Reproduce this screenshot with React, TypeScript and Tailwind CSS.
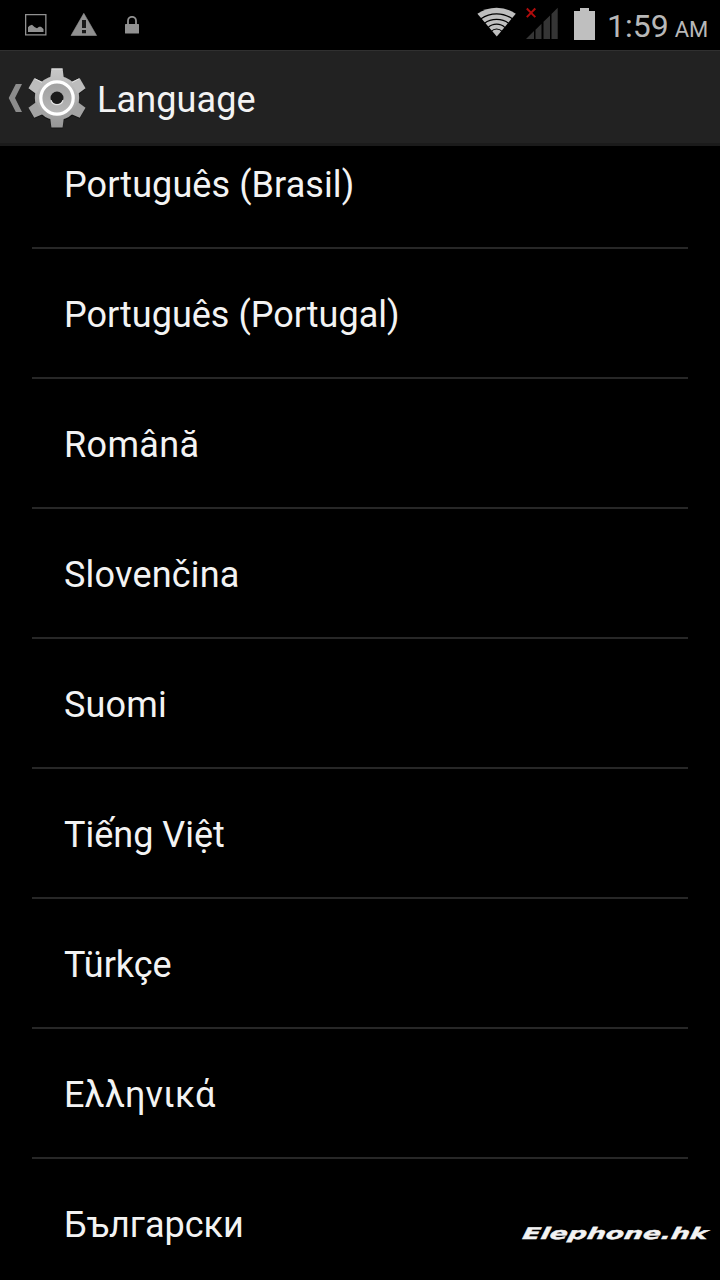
const languages: { name: string; tracking: string }[] = [
  { name: 'Português (Brasil)', tracking: 'tracking-[0.08px]' },
  { name: 'Português (Portugal)', tracking: 'tracking-normal' },
  { name: 'Română', tracking: 'tracking-[0.35px]' },
  { name: 'Slovenčina', tracking: 'tracking-[0.2px]' },
  { name: 'Suomi', tracking: 'tracking-[0.2px]' },
  { name: 'Tiếng Việt', tracking: 'tracking-normal' },
  { name: 'Türkçe', tracking: 'tracking-normal' },
  { name: 'Ελληνικά', tracking: 'tracking-[0.12px]' },
  { name: 'Български', tracking: 'tracking-normal' },
];

function PictureIcon() {
  return (
    <svg width="22" height="22" viewBox="0 0 22 22" fill="#919191">
      <path d="M0 0H21.5V21.5H0ZM1.3 1.3V20.2H20.2V1.3Z" fillRule="evenodd" />
      <path d="M3 18V13.2L4.5 11.8L7 10.8L9.5 13L12 14.2L14 12.8L16 12.8L18.5 15V18Z" />
    </svg>
  );
}

function WarningIcon() {
  return (
    <svg width="28" height="24" viewBox="0 0 28 24">
      <path d="M13.8 1.3L26.6 23.5H1Z" fill="#919191" stroke="#919191" strokeWidth=".6" strokeLinejoin="round" />
      <path d="M12 8H16V16H12ZM12 18H16V21.3H12Z" fill="#181818" />
    </svg>
  );
}

function LockIcon() {
  return (
    <svg width="14" height="18" viewBox="0 0 14 18">
      <path d="M3 9V4.8A4 4 0 0 1 11 4.8V9" fill="none" stroke="#919191" strokeWidth="1.8" />
      <rect y="8" width="14" height="9.5" rx=".5" fill="#919191" />
    </svg>
  );
}

function WifiIcon() {
  return (
    <svg width="40" height="30" viewBox="0 0 40 30">
      <path d="M.4 6.8Q9 .7 19.6.7T38.8 6.8L19.8 29.5Z" fill="#bfbfbf" />
      <g fill="none" stroke="#000" strokeWidth="1.2">
        <path d="M4 11.7Q11 6.8 19.6 6.8T35.4 11.7" />
        <path d="M7.5 16.2Q12.5 12.3 19.6 12.3T31.6 16.2" />
        <path d="M11 20.6Q14.5 17.2 19.6 17.2T28 20.6" />
        <path d="M14 24.6Q16.5 22 19.6 22T25.4 24.6" />
      </g>
    </svg>
  );
}

function SignalIcon() {
  return (
    <svg width="33" height="32" viewBox="0 0 33 32">
      <path d="M0 32L8 24V32ZM9.5 22.7L15.5 16.8V32H9.5ZM17.5 14.8L24 8.4V32H17.5ZM25.5 7L31.7 .8V32H25.5Z" fill="#353535" />
      <path d="M.8 1.5L9.3 10.1M9.3 1.5L.8 10.1" stroke="#b00c0c" strokeWidth="2" />
    </svg>
  );
}

function BatteryIcon() {
  return (
    <svg width="21" height="32" viewBox="0 0 21 32">
      <path d="M6 0H15V3H21V32H0V3H6Z" fill="#bfbfbf" />
    </svg>
  );
}

function GearIcon() {
  return (
    <svg width="60" height="62" viewBox="-30 -30 60 62">
      <defs>
        <linearGradient id="metal" gradientUnits="userSpaceOnUse" x1="0" y1="-30" x2="0" y2="30">
          <stop offset="0" stopColor="#c9c9c9" />
          <stop offset="1" stopColor="#969696" />
        </linearGradient>
        <linearGradient id="hub" x1="0" y1="0" x2="0" y2="1">
          <stop offset="0" stopColor="#a0a0a0" />
          <stop offset="1" stopColor="#b8b8b8" />
        </linearGradient>
      </defs>
      <g fill="#0d0d0d" opacity=".6" transform="translate(0 1)">
        <circle r="22.5" />
        {[0, 60, 120, 180, 240, 300].map((a) => (
          <path key={a} d="M-6.8-20L-5.8-29.5H5.8L6.8-20Z" transform={`rotate(${a})`} />
        ))}
      </g>
      <g fill="url(#metal)">
        <circle r="22.2" />
        <path d="M-6.8-20L-5.6-29.5H5.6L6.8-20ZM-6.8 20L-5.6 29.5H5.6L6.8 20Z" />
      </g>
      {[60, 120, 240, 300].map((a) => (
        <path
          key={a}
          d="M-6.8-20L-5.8-29.6H5.8L6.8-20Z"
          fill={a === 60 || a === 300 ? '#bdbdbd' : '#a3a3a3'}
          transform={`rotate(${a})`}
        />
      ))}
      <path d="M-5.5-29H5.5M-22.2-19.3L-15-15.5M22.2-19.3L15-15.5" stroke="#e0e0e0" strokeWidth="1" />
      <circle r="16.2" fill="url(#hub)" stroke="#fff" strokeWidth="3.2" />
      <circle r="6.5" fill="#1b1b1b" />
      <path d="M-6 2.2A6.3 6.3 0 0 0 6 2.2" fill="none" stroke="#e3e3e3" strokeWidth="1.2" />
    </svg>
  );
}

export default function App() {
  return (
    <div className="relative flex h-[1280px] w-[720px] flex-col overflow-hidden bg-black font-['Roboto','Noto_Sans',sans-serif]">
      <header className="flex h-[50px] shrink-0 items-start justify-between">
        <div className="flex items-start pl-[25px]">
          <div className="pt-[14px]"><PictureIcon /></div>
          <div className="ml-[23px] pt-3"><WarningIcon /></div>
          <div className="ml-[27px] pt-4"><LockIcon /></div>
        </div>
        <div className="flex items-start pr-3">
          <div className="pt-[7px]"><WifiIcon /></div>
          <div className="ml-[9px] pt-[7px]"><SignalIcon /></div>
          <div className="ml-[15px] pt-2"><BatteryIcon /></div>
          <div className="ml-[12px] flex h-[50px] w-[101px] items-baseline whitespace-nowrap pt-[7px] text-[#b8b8b8]">
            <span className="text-[32px] leading-[38px]">1:59</span>
            <span className="ml-[6px] text-[22px]">AM</span>
          </div>
        </div>
      </header>
      <div className="flex h-24 shrink-0 items-center border-t border-b-[3px] border-t-[#303030] border-b-[#1b1b1b] bg-[#222222] pl-2">
        <svg className="mt-[2px]" width="15" height="30" viewBox="0 0 15 30">
          <path d="M7.8 1H14L7 15L14 29H7.8L.7 15Z" fill="#8c8c8c" />
        </svg>
        <div className="ml-1 mt-[3px]"><GearIcon /></div>
        <h1 className="ml-[10px] mt-[5px] text-[36px] leading-[42px] tracking-[0.12px] text-[#f3f3f3]">Language</h1>
      </div>
      <main className="flex flex-1 flex-col justify-start overflow-hidden px-8">
        <ul className="-mt-[27px]">
          {languages.map(({ name, tracking }) => (
            <li key={name} className="flex h-[130px] items-center border-b-2 border-[#272727] px-8 pt-1 text-[36px] leading-[42px] text-[#f3f3f3]">
              <span className={tracking}>{name}</span>
            </li>
          ))}
        </ul>
      </main>
      <div className="absolute left-[521px] top-[1222px] h-6 w-[190px]">
        <span className="inline-block origin-bottom-left scale-x-[1.66] -skew-x-6 whitespace-nowrap font-['DejaVu_Sans',sans-serif] text-[16px] font-bold italic leading-5 text-[#f3f3f3] [-webkit-text-stroke:0.4px_#f3f3f3]">
          Elephone.hk
        </span>
      </div>
    </div>
  );
}
